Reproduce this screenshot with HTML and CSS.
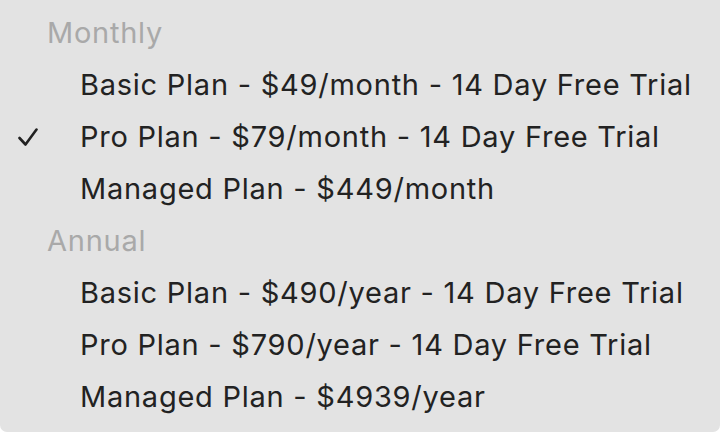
FILE: index.html
```html
<!DOCTYPE html>
<html>
<head>
<meta charset="utf-8">
<link rel="stylesheet" href="styles.css">
</head>
<body>
<div class="menu">
  <div class="group">Monthly</div>
  <div class="item"><span class="check"></span><span class="label">Basic Plan - $49/month - 14 Day Free Trial</span></div>
  <div class="item"><span class="check"><svg width="20" height="19" viewBox="0 0 20 19"><path d="M1.5 10 L7.5 16.5 L18.5 1.5" fill="none" stroke="#222" stroke-width="2.6" stroke-linecap="round" stroke-linejoin="round"/></svg></span><span class="label">Pro Plan - $79/month - 14 Day Free Trial</span></div>
  <div class="item"><span class="check"></span><span class="label">Managed Plan - $449/month</span></div>
  <div class="group">Annual</div>
  <div class="item"><span class="check"></span><span class="label">Basic Plan - $490/year - 14 Day Free Trial</span></div>
  <div class="item"><span class="check"></span><span class="label">Pro Plan - $790/year - 14 Day Free Trial</span></div>
  <div class="item"><span class="check"></span><span class="label">Managed Plan - $4939/year</span></div>
</div>
</body>
</html>
```
FILE: styles.css
```css
html, body {
  margin: 0;
  padding: 0;
  background: #ffffff;
}
.menu {
  width: 720px;
  height: 432px;
  box-sizing: border-box;
  padding-top: 7px;
  background: #e3e3e3;
  border-radius: 0 0 7px 7px;
  font-family: Inter, "Noto Sans", sans-serif;
  font-size: 29px;
  letter-spacing: 0.75px;
  color: #222222;
  overflow: hidden;
}
.group {
  height: 52px;
  line-height: 52px;
  padding-left: 47px;
  color: #a9a9a9;
}
.item {
  height: 52px;
  display: flex;
  align-items: center;
}
.check {
  width: 80px;
  display: flex;
  justify-content: flex-start;
  padding-left: 18px;
  box-sizing: border-box;
}
.check svg {
  display: block;
}
.label {
  line-height: 52px;
  white-space: nowrap;
}
```
